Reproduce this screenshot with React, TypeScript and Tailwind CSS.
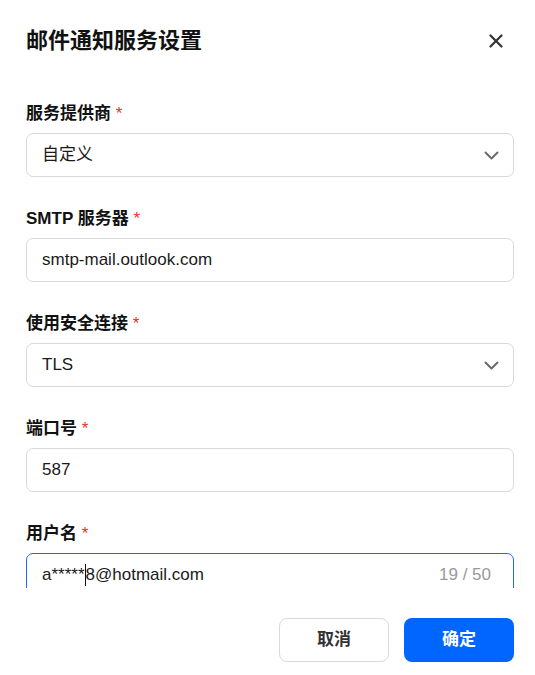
import React from 'react'

interface Field {
  label: string
  value: string
  kind: 'select' | 'input'
  focused?: boolean
  counter?: string
}

const fields: Field[] = [
  { label: '服务提供商', value: '自定义', kind: 'select' },
  { label: 'SMTP 服务器', value: 'smtp-mail.outlook.com', kind: 'input' },
  { label: '使用安全连接', value: 'TLS', kind: 'select' },
  { label: '端口号', value: '587', kind: 'input' },
  { label: '用户名', value: 'a*****8@hotmail.com', kind: 'input', focused: true, counter: '19 / 50' },
]

const font = { fontFamily: '"Liberation Sans", Arial, "Noto Sans CJK SC", sans-serif' }

function Chevron() {
  return (
    <svg width="15" height="9" viewBox="0 0 15 9" fill="none">
      <path d="M1.5 1.5l6 6 6-6" stroke="#6b6b6b" strokeWidth="2" strokeLinecap="round" strokeLinejoin="round" />
    </svg>
  )
}

export default function App() {
  return (
    <div className="w-[535px] h-[675px] bg-white pl-[26px] pr-[21px] text-[#1a1a1a] overflow-hidden" style={font}>
      {/* header */}
      <div className="h-[82px] flex items-center justify-between">
        <h2 className="text-[22px] leading-[26px] font-bold text-[#111]">邮件通知服务设置</h2>
        <button className="mr-[10px] w-[16px] h-[16px] flex items-center justify-center">
          <svg width="14" height="14" viewBox="0 0 14 14" fill="none">
            <path d="M1.5 1.5l11 11M12.5 1.5l-11 11" stroke="#333" strokeWidth="2.2" strokeLinecap="round" />
          </svg>
        </button>
      </div>

      {/* form body */}
      <div className="h-[506px] pt-[21px] overflow-hidden">
        {fields.map((f) => (
          <div key={f.label} className="mb-[31px]">
            <label className="block h-[22px] leading-[22px] text-[17px] font-bold text-[#111] mb-2">
              {f.label} <span className="text-[#e5322d] font-normal">*</span>
            </label>
            <div
              className={`h-11 flex items-center justify-between rounded-[7px] border pl-[15px] text-[17px] ${
                f.focused ? 'border-[#1f6ae8]' : 'border-[#d9d9d9]'
              } ${f.kind === 'select' ? 'pr-[14px]' : 'pr-[22px]'}`}
            >
              {f.focused ? (
                <span className="flex items-center">
                  a*****<span className="inline-block w-px h-[22px] bg-[#111]" />8@hotmail.com
                </span>
              ) : (
                <span>{f.value}</span>
              )}
              {f.kind === 'select' && <Chevron />}
              {f.counter && <span className="text-[#999]">{f.counter}</span>}
            </div>
          </div>
        ))}
      </div>

      {/* footer */}
      <div className="pt-[30px] flex justify-end gap-[15px]">
        <button className="w-[110px] h-11 rounded-lg border border-[#d9d9d9] bg-white text-[17px] font-bold text-[#333]">
          取消
        </button>
        <button className="w-[110px] h-11 rounded-lg bg-[#0066ff] text-[17px] font-bold text-white">
          确定
        </button>
      </div>
    </div>
  )
}
